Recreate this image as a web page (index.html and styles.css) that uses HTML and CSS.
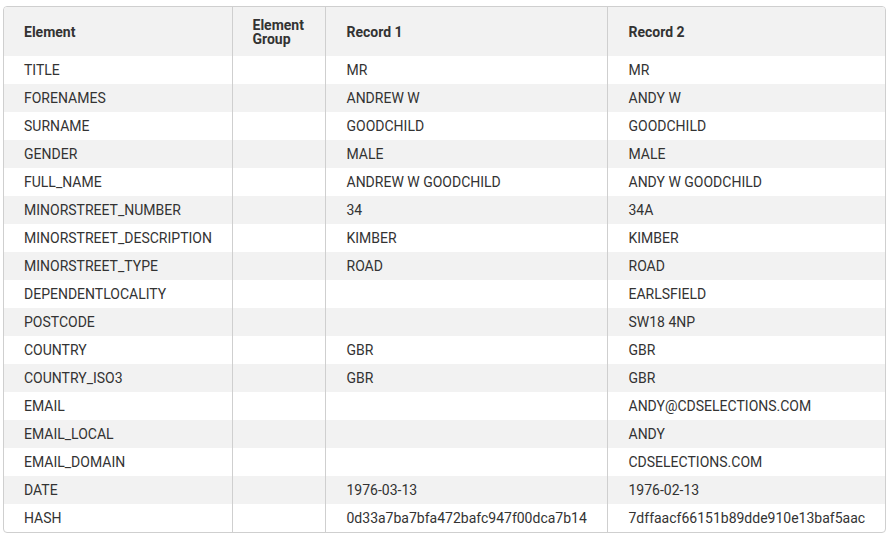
FILE: index.html
```html
<!DOCTYPE html>
<html>
<head>
<meta charset="utf-8">
<link rel="stylesheet" href="styles.css">
</head>
<body>
<div class="wrap">
<table class="grid">
<colgroup><col class="c1"><col class="c2"><col class="c3"><col class="c4"></colgroup>
<thead>
<tr><th>Element</th><th>Element Group</th><th>Record 1</th><th>Record 2</th></tr>
</thead>
<tbody>
<tr><td>TITLE</td><td></td><td>MR</td><td>MR</td></tr>
<tr><td>FORENAMES</td><td></td><td>ANDREW W</td><td>ANDY W</td></tr>
<tr><td>SURNAME</td><td></td><td>GOODCHILD</td><td>GOODCHILD</td></tr>
<tr><td>GENDER</td><td></td><td>MALE</td><td>MALE</td></tr>
<tr><td>FULL_NAME</td><td></td><td>ANDREW W GOODCHILD</td><td>ANDY W GOODCHILD</td></tr>
<tr><td>MINORSTREET_NUMBER</td><td></td><td>34</td><td>34A</td></tr>
<tr><td>MINORSTREET_DESCRIPTION</td><td></td><td>KIMBER</td><td>KIMBER</td></tr>
<tr><td>MINORSTREET_TYPE</td><td></td><td>ROAD</td><td>ROAD</td></tr>
<tr><td>DEPENDENTLOCALITY</td><td></td><td></td><td>EARLSFIELD</td></tr>
<tr><td>POSTCODE</td><td></td><td></td><td>SW18 4NP</td></tr>
<tr><td>COUNTRY</td><td></td><td>GBR</td><td>GBR</td></tr>
<tr><td>COUNTRY_ISO3</td><td></td><td>GBR</td><td>GBR</td></tr>
<tr><td>EMAIL</td><td></td><td></td><td>ANDY@CDSELECTIONS.COM</td></tr>
<tr><td>EMAIL_LOCAL</td><td></td><td></td><td>ANDY</td></tr>
<tr><td>EMAIL_DOMAIN</td><td></td><td></td><td>CDSELECTIONS.COM</td></tr>
<tr><td>DATE</td><td></td><td>1976-03-13</td><td>1976-02-13</td></tr>
<tr><td>HASH</td><td></td><td>0d33a7ba7bfa472bafc947f00dca7b14</td><td>7dffaacf66151b89dde910e13baf5aac</td></tr>
</tbody>
</table>
</div>
</body>
</html>
```
FILE: styles.css
```css
html, body {
  margin: 0;
  padding: 0;
  background: #fff;
}
body {
  padding: 6px 3px 0 3px;
  font-family: Roboto, "Liberation Sans", sans-serif;
  color: #333;
}
.wrap {
  width: 881px;
  border: 1px solid #cfcfcf;
  border-radius: 4px;
  overflow: hidden;
}
.grid {
  width: 100%;
  border-collapse: collapse;
  table-layout: fixed;
  font-size: 14px;
}
.c1 { width: 228px; }
.c2 { width: 93px; }
.c3 { width: 282px; }
.c4 { width: auto; }
.grid th {
  background: #f2f2f2;
  font-weight: 700;
  text-align: left;
  height: 49px;
  padding: 0 20px;
  line-height: 14px;
  vertical-align: middle;
  color: #333;
}
.grid td {
  height: 28px;
  padding: 0 20px;
  line-height: 16px;
  vertical-align: middle;
  white-space: nowrap;
  color: #333;
}
.grid th + th, .grid td + td {
  border-left: 1px solid #cfcfcf;
}
.grid th + th + th, .grid td + td + td {
  padding-left: 21px;
}
.grid tbody tr:nth-child(even) td {
  background: #f2f2f2;
}
.grid th, .grid td { box-sizing: border-box; }
```
